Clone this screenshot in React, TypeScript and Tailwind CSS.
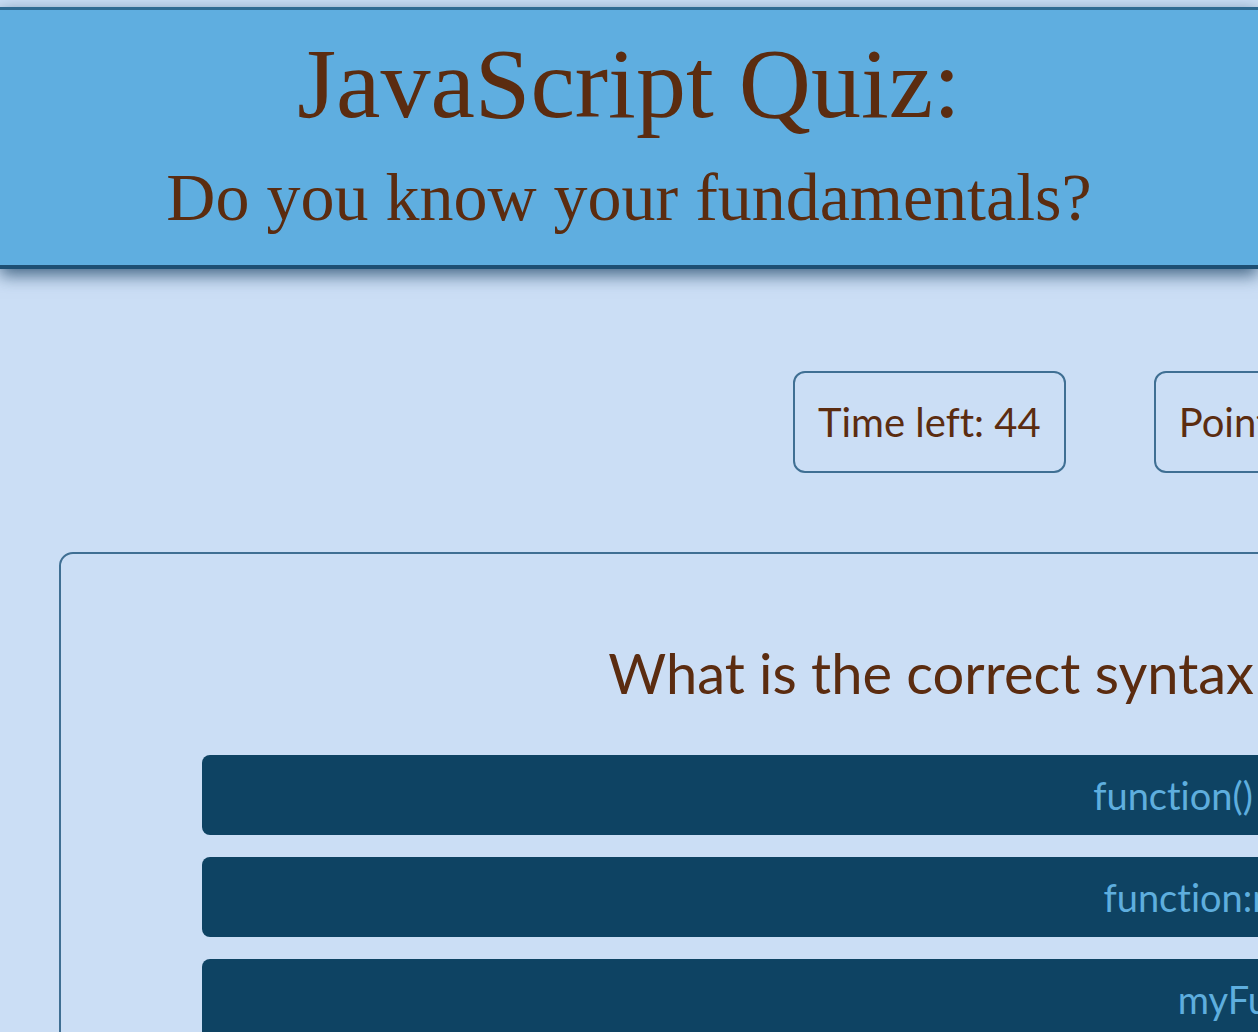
import React from 'react';

const answers = ['function() myFunction()', 'function:myFunction()', 'myFunction()', 'myFunction = function()'];

export default function App() {
  return (
    <div className="w-[1258px] h-[1032px] overflow-hidden bg-[#cbdef5] pt-[7px]">
      <header className="w-[1258px] bg-[#5faee0] border-t-[3px] border-t-[#2f6a92] border-b-[4px] border-b-[#1e4f73] shadow-[0_6px_16px_rgba(22,62,95,0.75)] pt-[24px] pb-[34px] text-center text-[#5b2c10] font-['Liberation_Serif',serif]">
        <h1 className="text-[100px] leading-[100px]">JavaScript Quiz:</h1>
        <h2 className="mt-[29px] text-[68px] leading-[68px]">Do you know your fundamentals?</h2>
      </header>

      <main className="w-[2572px] px-[59px] font-['Lato',sans-serif] text-[#5b2c10] [font-variant-ligatures:none]">
        <div className="flex gap-[88px] pl-[734px] pt-[102px]">
          <div className="rounded-[12px] border-2 border-[#3f6f93] px-[23px] py-[24px] text-[40px] leading-[50px]">Time left: 44</div>
          <div className="rounded-[12px] border-2 border-[#3f6f93] px-[23px] py-[24px] text-[40px] leading-[50px]">Points: 0</div>
        </div>

        <section className="mt-[79px] rounded-[14px] border-2 border-[#3f6f93] px-[141px] pt-[83px] pb-[60px]">
          <p className="text-center text-[56px] leading-[72px]">What is the correct syntax for defining a function in JS?</p>
          <div className="mt-[46px] flex flex-col gap-[22px]">
            {answers.map((a) => (
              <button key={a} className="h-[80px] rounded-[8px] bg-[#0e4363] text-center text-[38px] text-[#5eaede]">
                {a}
              </button>
            ))}
          </div>
        </section>
      </main>
    </div>
  );
}
